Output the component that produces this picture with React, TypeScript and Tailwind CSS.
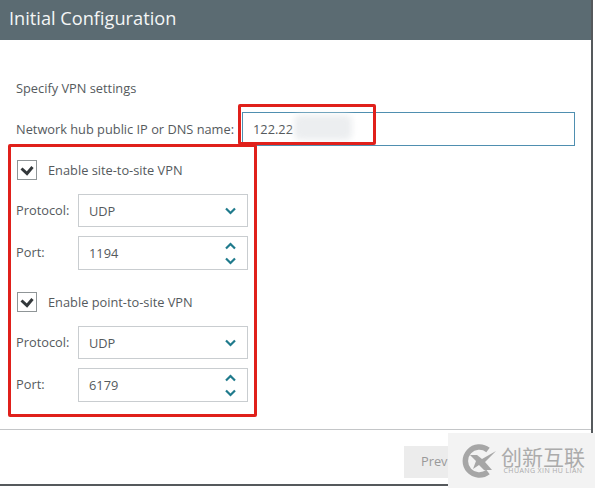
import React from "react";

const Chevron = ({ up = false }: { up?: boolean }) => (
  <svg width="11" height="8" viewBox="0 0 11 8" className="block">
    <path d={up ? "M1 6.5 L5.5 2 L10 6.5" : "M1 1.5 L5.5 6 L10 1.5"} fill="none" stroke="#1f7a8c" strokeWidth="2.2" />
  </svg>
);

const Check = () => (
  <div className="w-5 h-5 border border-[#8f9597] flex items-center justify-center bg-white">
    <svg width="14" height="11" viewBox="0 0 14 11">
      <path d="M1.5 3.5 L7 8.5 L12.5 2" fill="none" stroke="#33383b" strokeWidth="3" />
    </svg>
  </div>
);

const VpnGroup = ({ title, port }: { title: string; port: string }) => (
  <div>
    <div className="flex items-center h-5 pl-[17px]">
      <Check />
      <span className="ml-[11px] pt-[2px]">{title}</span>
    </div>
    <div className="flex items-center mt-[14px] pl-4">
      <span className="w-[62px]">Protocol:</span>
      <div className="w-[170px] h-[33px] border border-[#c9cdd0] flex items-center justify-between pl-[10px] pr-[11px]">
        <span className="pt-[2px]">UDP</span>
        <Chevron />
      </div>
    </div>
    <div className="flex items-center mt-[9px] pl-4">
      <span className="w-[62px]">Port:</span>
      <div className="w-[170px] h-[34px] border border-[#c9cdd0] flex items-center justify-between pl-[10px] pr-[11px]">
        <span className="pt-[2px]">{port}</span>
        <div className="flex flex-col gap-[7px]">
          <Chevron up />
          <Chevron />
        </div>
      </div>
    </div>
  </div>
);

export default function App() {
  return (
    <div className="relative w-[595px] h-[488px] bg-white overflow-hidden font-['Open_Sans',sans-serif] text-[12.8px] text-[#555a5d]">
      <div className="w-[593px] h-[486px] border-r-2 border-b-2 border-[#55595c] flex flex-col">
        <div className="h-10 bg-[#5b6b72] flex items-center pl-[9px] pb-[2px] text-[18.2px] text-[#f4f6f6] shrink-0">
          Initial Configuration
        </div>

        <div className="h-[390px] border-b border-[#c4c6c8] shrink-0">
          <div className="pl-4 mt-[39px] leading-[18px]">Specify VPN settings</div>
          <div className="flex items-center pl-4 mt-[15px]">
            <span className="w-[226px] pt-[2px] whitespace-nowrap">Network hub public IP or DNS name:</span>
            <div className="w-[333px] h-[34px] border border-[#4f8fb0] flex items-center pl-[10px] pt-[2px]">122.22</div>
          </div>
          <div className="mt-[14px] flex flex-col gap-[22px]">
            <VpnGroup title="Enable site-to-site VPN" port="1194" />
            <VpnGroup title="Enable point-to-site VPN" port="6179" />
          </div>
        </div>

        <div className="flex justify-end pt-4 pr-[17px]">
          <div className="w-[170px] h-8 bg-[#ececec] text-[#9a9a9a] flex items-center pl-[17px]">Prev</div>
        </div>
      </div>

      {/* blurred out part of the address */}
      <div className="absolute left-[294px] top-[115px] w-[58px] h-[25px] rounded-md bg-[#eceef0] blur-[3px]" />

      {/* red annotation boxes */}
      <div className="absolute left-[238px] top-[104px] w-[138px] h-[41px] border-[3px] border-[#e0201b] rounded-[2px]" />
      <div className="absolute left-[8px] top-[144px] w-[249px] h-[273px] border-[3px] border-[#e0201b] rounded-[2px]" />

      {/* watermark */}
      <div className="absolute left-[448px] top-[433px] w-[147px] h-[55px] bg-[#f3f3f3] flex items-center pl-[12px]">
        <svg width="38" height="36" viewBox="0 0 38 36" className="shrink-0">
          <path d="M28 7 A14 14 0 1 0 28 29" fill="none" stroke="#a6a6a6" strokeWidth="5.5" />
          <path d="M10 12 L17 12 L22 16 L36 8 L25 19 L32 27 L24 27 L19 22 L13 26 L16 18 Z" fill="#a6a6a6" />
        </svg>
        <div className="ml-[3px] flex flex-col items-center text-[#ababab]">
          <span className="font-['Noto_Sans_CJK_SC',sans-serif] text-[21px] leading-[20px] whitespace-nowrap">创新互联</span>
          <span className="text-[7px] leading-[8px] mt-[1px] tracking-[0.4px] whitespace-nowrap">CHUANG XIN HU LIAN</span>
        </div>
      </div>
    </div>
  );
}
